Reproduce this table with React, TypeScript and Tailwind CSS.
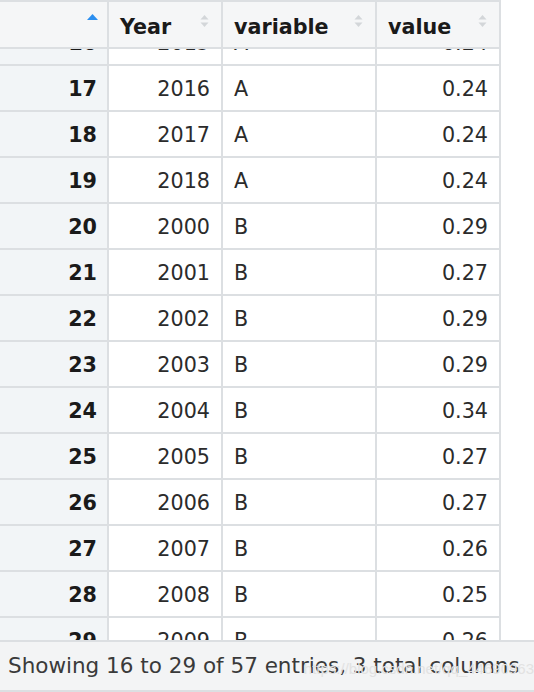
import React from "react";

type Row = { n: number; year: number; variable: string; value: string };

const rows: Row[] = [
  { n: 16, year: 2015, variable: "A", value: "0.24" },
  { n: 17, year: 2016, variable: "A", value: "0.24" },
  { n: 18, year: 2017, variable: "A", value: "0.24" },
  { n: 19, year: 2018, variable: "A", value: "0.24" },
  { n: 20, year: 2000, variable: "B", value: "0.29" },
  { n: 21, year: 2001, variable: "B", value: "0.27" },
  { n: 22, year: 2002, variable: "B", value: "0.29" },
  { n: 23, year: 2003, variable: "B", value: "0.29" },
  { n: 24, year: 2004, variable: "B", value: "0.34" },
  { n: 25, year: 2005, variable: "B", value: "0.27" },
  { n: 26, year: 2006, variable: "B", value: "0.27" },
  { n: 27, year: 2007, variable: "B", value: "0.26" },
  { n: 28, year: 2008, variable: "B", value: "0.25" },
  { n: 29, year: 2009, variable: "B", value: "0.26" },
];

// up/down arrows shown on unsorted columns
const SortBoth = () => (
  <svg width="9" height="12" viewBox="0 0 9 12" className="shrink-0">
    <path d="M4.5 0 L8.5 4.5 H0.5 Z" fill="#d3d6d9" />
    <path d="M4.5 12 L8.5 7.5 H0.5 Z" fill="#d3d6d9" />
  </svg>
);

const SortUp = () => (
  <svg width="11" height="6" viewBox="0 0 11 6">
    <path d="M5.5 0 L11 6 H0 Z" fill="#2c8ff0" />
  </svg>
);

const HeaderCell: React.FC<{ label: string; width: string }> = ({ label, width }) => (
  <div className={`${width} h-full border-r-2 border-[#dcdfe2] flex items-center justify-between pl-[11px] pr-[12px]`}>
    <span className="font-bold text-[#1a1a1a] pt-[6px]">{label}</span>
    <div className="-mt-[7px]">
      <SortBoth />
    </div>
  </div>
);

const cell = "border-r-2 border-[#dcdfe2] flex items-center pt-[4px]";

export default function App() {
  return (
    <div className="w-[534px] h-[692px] bg-white flex flex-col overflow-hidden relative font-['DejaVu_Sans',sans-serif] text-[20.7px] text-[#2b2b2b]">
      {/* header */}
      <div className="flex h-[49px] border-t-2 border-b-2 border-[#dcdfe2] w-[501px] bg-[#f5f6f7] shrink-0">
        <div className="w-[109px] h-full border-r-2 border-[#dcdfe2] flex justify-end pr-[9px] pt-[12px]">
          <SortUp />
        </div>
        <HeaderCell label="Year" width="w-[114px]" />
        <HeaderCell label="variable" width="w-[154px]" />
        <HeaderCell label="value" width="w-[124px]" />
      </div>

      {/* body, scrolled */}
      <div className="flex-1 overflow-hidden">
        <div className="-mt-[29px]">
          {rows.map((r) => (
            <div key={r.n} className="flex h-[46px] w-[501px] border-b-2 border-[#dcdfe2]">
              <div className={`${cell} w-[109px] bg-[#f2f5f7] justify-end pr-[10px] font-bold text-[#1a1a1a]`}>
                {r.n}
              </div>
              <div className={`${cell} w-[114px] justify-end pr-[11px]`}>{r.year}</div>
              <div className={`${cell} w-[154px] pl-[11px]`}>{r.variable}</div>
              <div className={`${cell} w-[124px] justify-end pr-[11px]`}>{r.value}</div>
            </div>
          ))}
        </div>
      </div>

      {/* footer */}
      <div className="h-[52px] shrink-0 border-t-2 border-b-2 border-[#dcdfe2] bg-[#f3f4f5] flex items-center pl-[8px] text-[21.5px] text-[#3a3a3a] whitespace-nowrap">
        Showing 16 to 29 of 57 entries, 3 total columns
      </div>
      <div className="absolute right-[0px] bottom-[12px] text-[15px] text-[#e2e2e2] font-['Liberation_Sans',sans-serif] pointer-events-none">
        https://blog.csdn.net/qq_44690963
      </div>
    </div>
  );
}
